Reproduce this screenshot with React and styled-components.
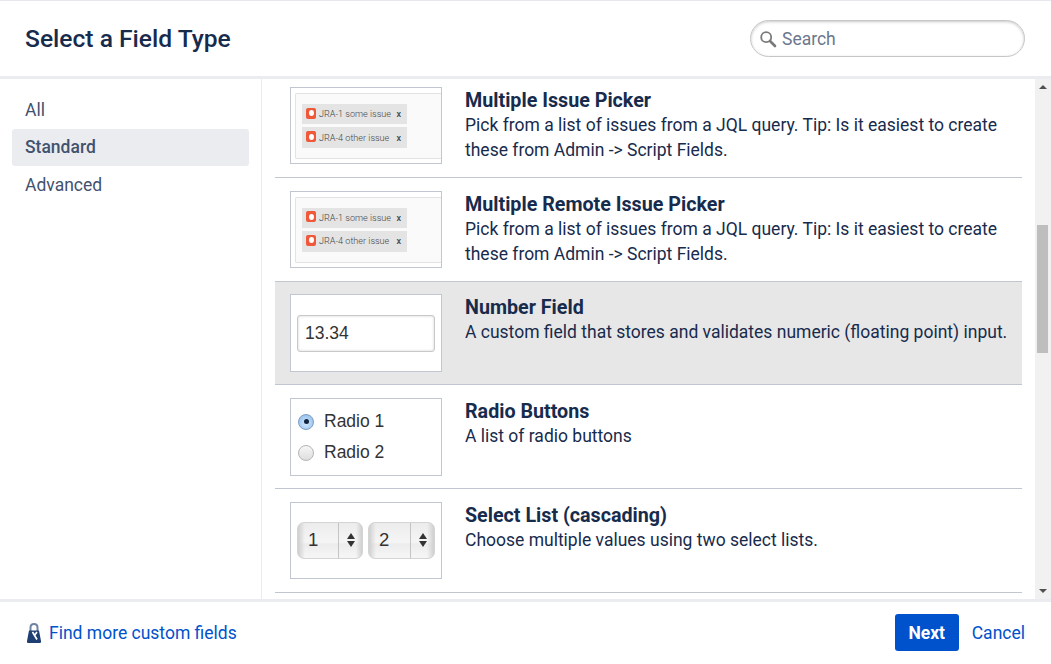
import React from 'react'
import styled, { createGlobalStyle } from 'styled-components'

const GlobalStyle = createGlobalStyle`
  html, body {
    margin: 0;
    padding: 0;
    background: #fff;
  }
  * {
    box-sizing: border-box;
  }
`

const Dialog = styled.div`
  width: 1051px;
  height: 664px;
  display: flex;
  flex-direction: column;
  overflow: hidden;
  background: #fff;
  border-top: 1px solid #e6e8ee;
  font-family: Roboto, "Liberation Sans", sans-serif;
  color: #172b4d;
`

const Header = styled.header`
  flex: 0 0 78px;
  display: flex;
  align-items: center;
  justify-content: space-between;
  padding: 0 26px 0 25px;
  border-bottom: 3px solid #ebecf0;
`

const Title = styled.h2`
  margin: 0;
  font-size: 24.6px;
  font-weight: 500;
  line-height: 32px;
  color: #172b4d;
`

const SearchBox = styled.div`
  width: 275px;
  height: 37px;
  display: flex;
  align-items: center;
  gap: 5px;
  padding-left: 8px;
  border: 1px solid #c6c6c6;
  border-radius: 19px;
  box-shadow: inset 0 1px 3px rgba(0, 0, 0, 0.22);
  font-size: 17.5px;
  color: #6b778c;
`

const Body = styled.div`
  flex: 1;
  min-height: 0;
  display: flex;
`

const Sidebar = styled.nav`
  flex: 0 0 262px;
  padding: 13px 12px 0;
  border-right: 1px solid #ebecf0;
`

const NavItem = styled.div`
  height: 37px;
  margin-bottom: ${(p) => (p.$active ? '1px' : '0')};
  padding: 0 13px 2px;
  display: flex;
  align-items: center;
  border-radius: 3px;
  font-size: 17.5px;
  font-weight: ${(p) => (p.$active ? 500 : 400)};
  color: #42526e;
  background: ${(p) => (p.$active ? '#ebecf0' : 'transparent')};
`

const ListPane = styled.div`
  flex: 1;
  min-width: 0;
  overflow: hidden;
  padding-left: 13px;
`

const List = styled.div`
  width: 747px;
  margin-top: -5px;
`

const Row = styled.div`
  height: 103.75px;
  display: flex;
  gap: 23px;
  padding: 12.75px 8px 0 15px;
  border-bottom: 1px solid #c1c7d0;
  background: ${(p) => (p.$active ? '#e7e7e7' : 'transparent')};
`

const Thumb = styled.div`
  flex: 0 0 152px;
  height: 77.5px;
  background: #fff;
  border: 1px solid #c1c7d0;
`

const Info = styled.div`
  flex: 1;
  min-width: 0;
  padding-top: 1px;
`

const RowTitle = styled.div`
  font-size: 19.7px;
  font-weight: 700;
  line-height: 25px;
  color: #172b4d;
`

const RowDesc = styled.div`
  max-width: 545px;
  font-size: 17.5px;
  line-height: 25px;
  color: #172b4d;
`

const IssuePanel = styled.div`
  height: 66px;
  margin: 5px 0 0 4px;
  padding: 10px 0 0 6px;
  display: flex;
  flex-direction: column;
  align-items: flex-start;
  gap: 3px;
  background: #fafafa;
  border: 1px solid #e2e2e2;
  border-right: 0;
  border-radius: 2px 0 0 2px;
`

const IssueChip = styled.div`
  height: 20.5px;
  width: 105px;
  display: flex;
  align-items: center;
  padding: 0 6px 0 4px;
  background: #e4e4e4;
  font-family: Roboto, sans-serif;
  font-weight: 300;
  font-size: 9.1px;
  color: #444;
`

const IssueIcon = styled.span`
  flex: 0 0 10px;
  height: 11px;
  margin: -2px 3px 0 0;
  display: flex;
  align-items: center;
  justify-content: center;
  border-radius: 2px;
  background: #f0583a;

  &::after {
    content: '';
    width: 5px;
    height: 6px;
    border-radius: 50%;
    background: #fff;
  }
`

const IssueName = styled.span`
  flex: 1;
  white-space: nowrap;
`

const IssueClose = styled.span`
  font-weight: 500;
  color: #444;
`

const FakeInput = styled.div`
  width: 138px;
  height: 37px;
  margin: 20px 0 0 6px;
  padding-left: 7px;
  display: flex;
  align-items: center;
  background: #fff;
  border: 1px solid #c8c8c8;
  border-radius: 3px;
  box-shadow: inset 0 0 3px rgba(0, 0, 0, 0.18);
  font-family: "Liberation Sans", sans-serif;
  font-size: 17.5px;
  color: #333;
`

const RadioList = styled.div`
  padding: 7px 0 0 7px;
`

const RadioRow = styled.div`
  height: 31px;
  display: flex;
  align-items: center;
  gap: 10px;
  font-family: "Liberation Sans", sans-serif;
  font-size: 17.5px;
  color: #333;
`

const RadioDot = styled.span`
  width: 16px;
  height: 16px;
  display: flex;
  align-items: center;
  justify-content: center;
  border-radius: 50%;
  border: 1px solid ${(p) => (p.$on ? '#7a9cc6' : '#b5b5b5')};
  background: ${(p) =>
    p.$on
      ? 'radial-gradient(circle at 50% 60%, #d4e8fb 0%, #8fbdec 90%)'
      : 'linear-gradient(#f6f6f6, #dedede)'};

  &::after {
    content: '';
    display: ${(p) => (p.$on ? 'block' : 'none')};
    width: 5px;
    height: 5px;
    border-radius: 50%;
    background: #10243f;
  }
`

const SelectPair = styled.div`
  margin: 19px 0 0 6px;
  display: flex;
  gap: 5px;
`

const FakeSelect = styled.div`
  width: ${(p) => (p.$wide ? '67px' : '66px')};
  height: 37px;
  display: flex;
  border: 1px solid #d4d4d4;
  border-radius: 7px;
  background:
    linear-gradient(90deg, #cfcfcf 0, rgba(240, 240, 240, 0) 7px, rgba(240, 240, 240, 0) 58px, #cfcfcf 100%),
    linear-gradient(#ececec 0, #f5f5f5 55%, #ececec 60%, #f6f6f6 100%);
  font-family: "Liberation Sans", sans-serif;
  font-size: 18.5px;
  color: #333;
`

const SelectValue = styled.div`
  flex: 1;
  padding-left: 10px;
  display: flex;
  align-items: center;
  border-right: 1px solid #c4c4c4;
`

const SelectArrows = styled.div`
  flex: 0 0 23px;
  display: flex;
  flex-direction: column;
  align-items: center;
  justify-content: center;
  gap: 2px;
`

const Arrow = styled.span`
  width: 0;
  height: 0;
  border-left: 4px solid transparent;
  border-right: 4px solid transparent;
  ${(p) => (p.$up ? 'border-bottom: 6px solid #333;' : 'border-top: 6px solid #333;')}
`

const ScrollTrack = styled.div`
  flex: 0 0 16px;
  margin-left: 13px;
  display: flex;
  flex-direction: column;
  align-items: center;
  background: #f1f1f1;
`

const ScrollArrow = styled.span`
  flex: none;
  width: 0;
  height: 0;
  margin: ${(p) => (p.$up ? '6px 0 0' : '0 0 6px')};
  border-left: 4px solid transparent;
  border-right: 4px solid transparent;
  ${(p) => (p.$up ? 'border-bottom: 4px solid #505050;' : 'border-top: 4px solid #505050;')}
`

const ScrollSpace = styled.div`
  flex: ${(p) => p.$grow};
`

const ScrollThumb = styled.div`
  flex: 0 0 128px;
  width: 100%;
  padding: 0 3px 0 2px;
  background: #bebebe;
  background-clip: content-box;
`

const Footer = styled.footer`
  flex: 0 0 65px;
  display: flex;
  align-items: center;
  justify-content: space-between;
  padding: 0 26px 1px 27px;
  border-top: 3px solid #ebecf0;
`

const FooterLink = styled.a`
  color: #0052cc;
  font-size: 17.5px;
  text-decoration: none;
`

const MarketLink = styled.div`
  display: flex;
  align-items: center;
  gap: 8px;
`

const Actions = styled.div`
  display: flex;
  align-items: center;
  gap: 13px;
`

const NextButton = styled.button`
  width: 64px;
  height: 37px;
  border: 0;
  border-radius: 3px;
  background: #0052cc;
  color: #fff;
  font-family: inherit;
  font-size: 17.5px;
  font-weight: 700;
`

const SearchIcon = () => (
  <svg width="18" height="18" viewBox="0 0 18 18" fill="none" stroke="#7a7a7a">
    <circle cx="7.2" cy="7.2" r="5" strokeWidth="1.8" />
    <path d="M11 11l5 5" strokeWidth="2.6" strokeLinecap="round" />
  </svg>
)

const MarketIcon = () => (
  <svg width="14" height="20" viewBox="0 0 14 20">
    <path d="M3.5 8V4.5C3.5 2.3 5 1 7 1s3.5 1.3 3.5 3.5V8" fill="none" stroke="#6f83a3" strokeWidth="2" />
    <path d="M2 7.5h10L14 18a1.5 1.5 0 0 1-1.5 2h-11A1.5 1.5 0 0 1 0 18z" fill="#1f3f73" />
    <path d="M5.5 9l4.5 7.5M10 9l-3 4" stroke="#fff" strokeWidth="1.7" fill="none" />
  </svg>
)

const IssuePreview = () => (
  <IssuePanel>
    <IssueChip>
      <IssueIcon />
      <IssueName>JRA-1 some issue</IssueName>
      <IssueClose>x</IssueClose>
    </IssueChip>
    <IssueChip>
      <IssueIcon />
      <IssueName>JRA-4 other issue</IssueName>
      <IssueClose>x</IssueClose>
    </IssueChip>
  </IssuePanel>
)

const SelectPreview = ({ value, wide }) => (
  <FakeSelect $wide={wide}>
    <SelectValue>{value}</SelectValue>
    <SelectArrows>
      <Arrow $up />
      <Arrow />
    </SelectArrows>
  </FakeSelect>
)

const fields = [
  {
    title: 'Multiple Issue Picker',
    desc: 'Pick from a list of issues from a JQL query. Tip: Is it easiest to create these from Admin -> Script Fields.',
    preview: <IssuePreview />,
  },
  {
    title: 'Multiple Remote Issue Picker',
    desc: 'Pick from a list of issues from a JQL query. Tip: Is it easiest to create these from Admin -> Script Fields.',
    preview: <IssuePreview />,
  },
  {
    title: 'Number Field',
    desc: 'A custom field that stores and validates numeric (floating point) input.',
    active: true,
    preview: <FakeInput>13.34</FakeInput>,
  },
  {
    title: 'Radio Buttons',
    desc: 'A list of radio buttons',
    preview: (
      <RadioList>
        <RadioRow>
          <RadioDot $on />
          Radio 1
        </RadioRow>
        <RadioRow>
          <RadioDot />
          Radio 2
        </RadioRow>
      </RadioList>
    ),
  },
  {
    title: 'Select List (cascading)',
    desc: 'Choose multiple values using two select lists.',
    preview: (
      <SelectPair>
        <SelectPreview value="1" />
        <SelectPreview value="2" wide />
      </SelectPair>
    ),
  },
]

export default function App() {
  return (
    <Dialog>
      <GlobalStyle />
      <Header>
        <Title>Select a Field Type</Title>
        <SearchBox>
          <SearchIcon />
          Search
        </SearchBox>
      </Header>
      <Body>
        <Sidebar>
          <NavItem>All</NavItem>
          <NavItem $active>Standard</NavItem>
          <NavItem>Advanced</NavItem>
        </Sidebar>
        <ListPane>
          <List>
            {fields.map((f) => (
              <Row key={f.title} $active={f.active}>
                <Thumb>{f.preview}</Thumb>
                <Info>
                  <RowTitle>{f.title}</RowTitle>
                  <RowDesc>{f.desc}</RowDesc>
                </Info>
              </Row>
            ))}
          </List>
        </ListPane>
        <ScrollTrack>
          <ScrollArrow $up />
          <ScrollSpace $grow={136} />
          <ScrollThumb />
          <ScrollSpace $grow={236} />
          <ScrollArrow />
        </ScrollTrack>
      </Body>
      <Footer>
        <MarketLink>
          <MarketIcon />
          <FooterLink href="#">Find more custom fields</FooterLink>
        </MarketLink>
        <Actions>
          <NextButton>Next</NextButton>
          <FooterLink href="#">Cancel</FooterLink>
        </Actions>
      </Footer>
    </Dialog>
  )
}
